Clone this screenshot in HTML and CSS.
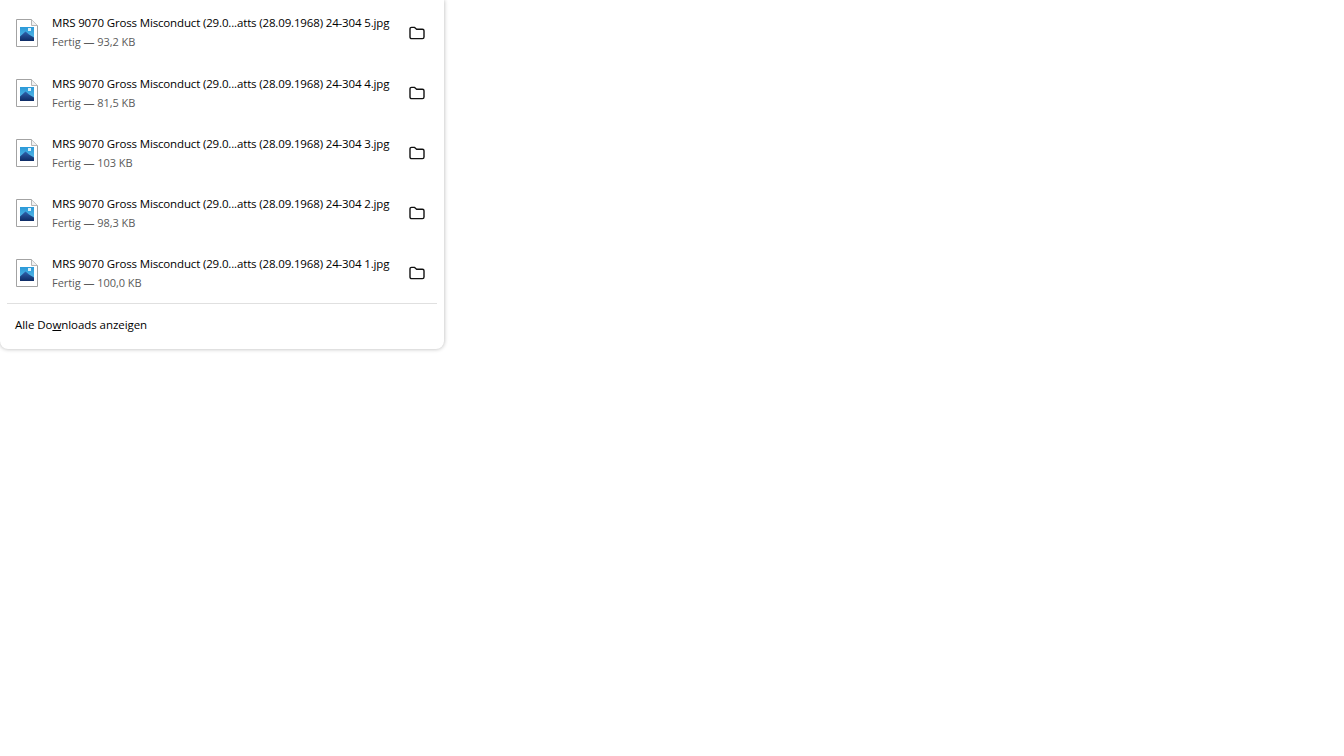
FILE: index.html
```html
<!DOCTYPE html>
<html lang="de">
<head>
<meta charset="utf-8">
<title>Downloads</title>
<link rel="stylesheet" href="styles.css">
</head>
<body>
<svg class="defs" width="0" height="0" aria-hidden="true">
  <defs>
    <linearGradient id="sky" x1="0" y1="0" x2="0" y2="1"><stop offset="0" stop-color="#2b9ad8"/><stop offset="1" stop-color="#5cbdea"/></linearGradient>
    <linearGradient id="hill" x1="0" y1="0" x2="0" y2="1"><stop offset="0" stop-color="#2f62ad"/><stop offset="1" stop-color="#0e2c66"/></linearGradient>
    <symbol id="file" viewBox="0 0 22 28">
      <path d="M.5.5H15.5L21.5 6.5V27.5H.5Z" fill="#fff" stroke="#a3a3a3"/>
      <path d="M15.5 .5V6.5H21.5" fill="#f0f0f0" stroke="#b5b5b5"/>
      <rect x="4" y="8" width="14" height="14" fill="url(#sky)"/>
      <rect x="12" y="9" width="3" height="3" fill="#d6eefa"/>
      <path d="M4 22V17.5L9.5 12.5 13 15.5 18 18.5V22Z" fill="url(#hill)"/>
    </symbol>
    <symbol id="folder" viewBox="0 0 16 14">
      <path d="M1 3A1.6 1.6 0 0 1 2.6 1.4H5.6L7.6 3.2H13.4A1.6 1.6 0 0 1 15 4.8V11A1.6 1.6 0 0 1 13.4 12.6H2.6A1.6 1.6 0 0 1 1 11Z" fill="none" stroke="#111" stroke-width="1.4" stroke-linejoin="round"/>
    </symbol>
  </defs>
</svg>
<main class="panel">
  <ul class="list">
    <li class="row first">
      <svg class="file"><use href="#file"/></svg>
      <div class="info"><div class="name">MRS 9070 Gross Misconduct (29.0...atts (28.09.1968) 24-304 5.jpg</div><div class="status">Fertig — 93,2 KB</div></div>
      <svg class="folder"><use href="#folder"/></svg>
    </li>
    <li class="row">
      <svg class="file"><use href="#file"/></svg>
      <div class="info"><div class="name">MRS 9070 Gross Misconduct (29.0...atts (28.09.1968) 24-304 4.jpg</div><div class="status">Fertig — 81,5 KB</div></div>
      <svg class="folder"><use href="#folder"/></svg>
    </li>
    <li class="row">
      <svg class="file"><use href="#file"/></svg>
      <div class="info"><div class="name">MRS 9070 Gross Misconduct (29.0...atts (28.09.1968) 24-304 3.jpg</div><div class="status">Fertig — 103 KB</div></div>
      <svg class="folder"><use href="#folder"/></svg>
    </li>
    <li class="row">
      <svg class="file"><use href="#file"/></svg>
      <div class="info"><div class="name">MRS 9070 Gross Misconduct (29.0...atts (28.09.1968) 24-304 2.jpg</div><div class="status">Fertig — 98,3 KB</div></div>
      <svg class="folder"><use href="#folder"/></svg>
    </li>
    <li class="row">
      <svg class="file"><use href="#file"/></svg>
      <div class="info"><div class="name">MRS 9070 Gross Misconduct (29.0...atts (28.09.1968) 24-304 1.jpg</div><div class="status">Fertig — 100,0 KB</div></div>
      <svg class="folder"><use href="#folder"/></svg>
    </li>
  </ul>
  <div class="footer">Alle Do<span class="key">w</span>nloads anzeigen</div>
</main>
</body>
</html>
```
FILE: styles.css
```css
html, body {
  margin: 0;
  padding: 0;
  height: 100%;
  background: #fff;
  overflow: hidden;
}
body {
  font-family: "Open Sans", "Noto Sans", sans-serif;
  color: #000;
}
.defs {
  display: block;
  height: 0;
}
.panel {
  width: 444px;
  height: 349px;
  box-sizing: border-box;
  padding: 3px 7px 0;
  background: #fff;
  border-radius: 0 0 8px 8px;
  box-shadow: 0 0 4px rgba(0, 0, 0, .3);
}
.list {
  list-style: none;
  margin: 0;
  padding: 0 0 0 9px;
  border-bottom: 1px solid #e0e0e0;
  height: 300px;
}
.row {
  display: flex;
  align-items: center;
  height: 60px;
}
.first .info {
  margin-bottom: 2px;
}
.file {
  width: 22px;
  height: 28px;
  flex: none;
}
.info {
  margin-left: 14px;
  width: 352px;
  flex: none;
}
.name {
  font-size: 11.5px;
  line-height: 19px;
  white-space: nowrap;
  letter-spacing: -.15px;
}
.status {
  font-size: 11px;
  line-height: 19px;
  color: #5b5b5b;
  letter-spacing: -.05px;
}
.folder {
  width: 16px;
  height: 14px;
  flex: none;
  margin-left: 5px;
  margin-bottom: 1px;
}
.footer {
  font-size: 11.5px;
  line-height: 17px;
  padding: 12px 0 0 8px;
  letter-spacing: -.06px;
}
.key {
  text-decoration: underline;
}
```
